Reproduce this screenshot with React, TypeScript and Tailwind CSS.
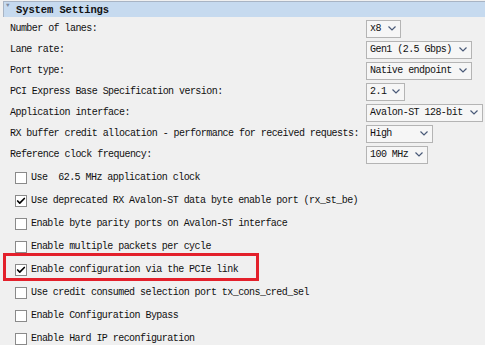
import { Check } from 'lucide-react';

const mono = { fontFamily: '"Liberation Mono", "DejaVu Sans Mono", monospace' };

type Field = { label: string; value: string; width: string };

const fields: Field[] = [
  { label: 'Number of lanes:', value: 'x8', width: 'w-[35px]' },
  { label: 'Lane rate:', value: 'Gen1 (2.5 Gbps)', width: 'w-[106px]' },
  { label: 'Port type:', value: 'Native endpoint', width: 'w-[106px]' },
  { label: 'PCI Express Base Specification version:', value: '2.1', width: 'w-[39px]' },
  { label: 'Application interface:', value: 'Avalon-ST 128-bit', width: 'w-[117px]' },
  { label: 'RX buffer credit allocation - performance for received requests:', value: 'High', width: 'w-[67px]' },
  { label: 'Reference clock frequency:', value: '100 MHz', width: 'w-[62px]' },
];

const options = [
  { label: 'Use  62.5 MHz application clock', checked: false },
  { label: 'Use deprecated RX Avalon-ST data byte enable port (rx_st_be)', checked: true },
  { label: 'Enable byte parity ports on Avalon-ST interface', checked: false },
  { label: 'Enable multiple packets per cycle', checked: false },
  { label: 'Enable configuration via the PCIe link', checked: true, highlight: true },
  { label: 'Use credit consumed selection port tx_cons_cred_sel', checked: false },
  { label: 'Enable Configuration Bypass', checked: false },
  { label: 'Enable Hard IP reconfiguration', checked: false },
];

function Select({ value, width }: { value: string; width: string }) {
  return (
    <div
      className={`${width} h-[18px] flex items-center justify-between pl-[3px] pr-[4px] bg-[#f6f6f6] border border-[#b4b4b4] text-[10px] tracking-[-0.55px] text-[#111]`}
    >
      <span className="whitespace-pre">{value}</span>
      <svg width="8" height="5" viewBox="0 0 8 5" className="shrink-0">
        <path d="M0.5 0.5 L4 4 L7.5 0.5" fill="none" stroke="#4a5a78" strokeWidth="1.2" />
      </svg>
    </div>
  );
}

export default function App() {
  return (
    <div className="w-[485px] h-[345px] overflow-hidden bg-[#f0f0f0] text-[#111]" style={mono}>
      {/* Header */}
      <div className="mt-px ml-[3px] h-[16px] bg-[#c6daef] border-t border-l border-[#a8b4c4] flex items-end relative">
        <span className="absolute left-[2px] top-[1px] text-[6px] leading-none text-[#7d8ba0]">▼</span>
        <span className="ml-[12px] text-[10.5px] font-bold leading-[14px] tracking-[-0.1px]">System Settings</span>
      </div>

      {/* Parameters */}
      <div className="pl-[10px] pt-px">
        {fields.map((f) => (
          <div key={f.label} className="h-[21px] flex items-center">
            <div className="w-[356px] text-[10px] tracking-[-0.55px] whitespace-pre">{f.label}</div>
            <Select value={f.value} width={f.width} />
          </div>
        ))}
      </div>

      {/* Options */}
      <div className="mt-[1px]">
        {options.map((o) => (
          <div key={o.label} className="relative h-[23px] flex items-center pl-[15px]">
            {o.highlight && (
              <span className="absolute -top-[5px] bottom-0 left-[3px] w-[256px] border-[3px] border-[#e3202b]" />
            )}
            <div className="w-[12px] h-[12px] bg-white border border-[#8a8a8a] flex items-center justify-center">
              {o.checked && <Check size={10} strokeWidth={4} className="text-black" />}
            </div>
            <span className="ml-[4px] text-[10px] tracking-[-0.55px] whitespace-pre">{o.label}</span>
          </div>
        ))}
      </div>
    </div>
  );
}
